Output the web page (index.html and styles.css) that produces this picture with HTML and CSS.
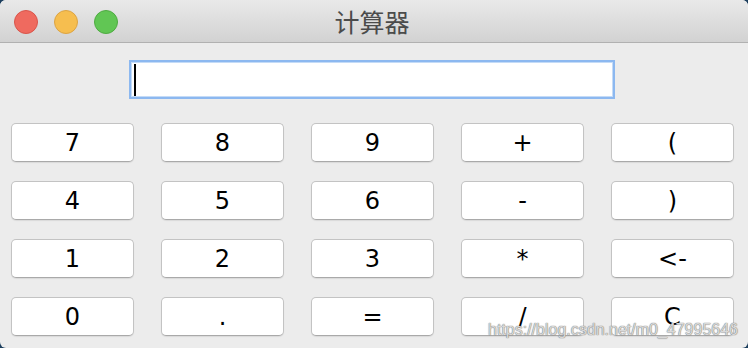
FILE: index.html
```html
<!DOCTYPE html>
<html lang="zh">
<head>
    <meta charset="UTF-8">
    <meta name="viewport" content="width=device-width, initial-scale=1.0">
    <title>计算器</title>
    <link rel="stylesheet" href="styles.css">
</head>
<body>
    <div class="window">
        <div class="titlebar">
            <div class="lights">
                <span class="light red"></span>
                <span class="light yellow"></span>
                <span class="light green"></span>
            </div>
            <div class="title">计算器</div>
        </div>

        <div class="content">
            <div class="display"><span class="caret"></span></div>

            <div class="keys">
                <button class="key">7</button>
                <button class="key">8</button>
                <button class="key">9</button>
                <button class="key">+</button>
                <button class="key">(</button>
                <button class="key">4</button>
                <button class="key">5</button>
                <button class="key">6</button>
                <button class="key">-</button>
                <button class="key">)</button>
                <button class="key">1</button>
                <button class="key">2</button>
                <button class="key">3</button>
                <button class="key">*</button>
                <button class="key">&lt;-</button>
                <button class="key">0</button>
                <button class="key">.</button>
                <button class="key">=</button>
                <button class="key">/</button>
                <button class="key">C</button>
            </div>
        </div>

        <div class="watermark">https://blog.csdn.net/m0_47995646</div>
    </div>
</body>
</html>
```

FILE: styles.css
```css
body {
    margin: 0;
    background: #1d3f5e;
    font-family: "DejaVu Sans", "Noto Sans CJK SC", sans-serif;
}
.window {
    position: relative;
    width: 748px;
    height: 348px;
    background: #ececec;
    border-radius: 6px;
    overflow: hidden;
}
.titlebar {
    position: relative;
    height: 42px;
    background: linear-gradient(#e9e9e9, #d2d2d2);
    border-bottom: 1px solid #b1b1b1;
    display: flex;
    align-items: center;
    justify-content: center;
}
.lights {
    position: absolute;
    left: 14px;
    top: 10px;
    display: flex;
    gap: 16px;
}
.light {
    width: 22px;
    height: 22px;
    border-radius: 50%;
    border: 1px solid;
}
.red {
    background: #ef6a5f;
    border-color: #d9554b;
}
.yellow {
    background: #f6be4f;
    border-color: #dca444;
}
.green {
    background: #61c654;
    border-color: #4fab42;
}
.title {
    font-family: "Noto Sans CJK SC", sans-serif;
    font-size: 25px;
    color: #4b4b4b;
    margin-left: -4px;
    margin-top: -1px;
}
.content {
    padding: 17px 0 0 11px;
}
.display {
    width: 479px;
    height: 35px;
    margin-left: 118px;
    background: #fff;
    border: 2px solid #8cb8f0;
    box-shadow: inset 0 0 0 1px #c4dbf7;
    display: flex;
    align-items: center;
    padding-left: 3px;
}
.caret {
    width: 2px;
    height: 32px;
    background: #000;
}
.keys {
    margin-top: 24px;
    display: grid;
    grid-template-columns: repeat(5, 123px);
    grid-auto-rows: 39px;
    column-gap: 27px;
    row-gap: 19px;
}
.key {
    background: #fff;
    border: 1px solid #c3c3c3;
    border-bottom-color: #a9a9a9;
    border-radius: 5px;
    box-shadow: 0 1px 1px rgba(0, 0, 0, 0.08);
    font-family: "DejaVu Sans", sans-serif;
    font-size: 24px;
    color: #000;
    padding: 0;
}
.watermark {
    position: absolute;
    right: 10px;
    bottom: 9px;
    font-family: "Liberation Sans", Arial, sans-serif;
    font-size: 16px;
    color: rgba(235, 235, 235, 0.85);
    text-shadow: 0 0 1px #777, 0 0 1px #777;
}
```
